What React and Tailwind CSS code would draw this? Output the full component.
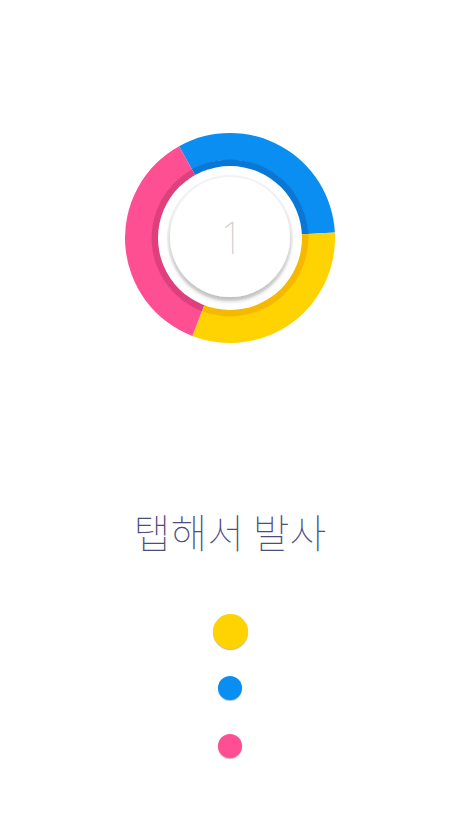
import React from 'react'

const C = 105

function pt(r, deg) {
  const a = (deg * Math.PI) / 180
  return [C + r * Math.sin(a), C - r * Math.cos(a)]
}

function sector(a1, a2, r1, r2) {
  const [x1, y1] = pt(r2, a1)
  const [x2, y2] = pt(r2, a2)
  const [x3, y3] = pt(r1, a2)
  const [x4, y4] = pt(r1, a1)
  const big = a2 - a1 > 180 ? 1 : 0
  return `M${x1} ${y1} A${r2} ${r2} 0 ${big} 1 ${x2} ${y2} L${x3} ${y3} A${r1} ${r1} 0 ${big} 0 ${x4} ${y4} Z`
}

const segments = [
  { from: -29, to: 87, color: '#0a8ef2', dark: '#0877d6' },
  { from: 87, to: 201, color: '#ffd302', dark: '#f7b900' },
  { from: 201, to: 331, color: '#ff4f93', dark: '#df3f7c' },
]

function Wheel() {
  return (
    <svg width="210" height="210" viewBox="0 0 210 210">
      <defs>
        <filter id="disk" x="-20%" y="-20%" width="140%" height="150%">
          <feDropShadow dx="0" dy="4" stdDeviation="2" floodColor="#000" floodOpacity="0.22" />
        </filter>
      </defs>
      {segments.map((s) => (
        <g key={s.from}>
          <path d={sector(s.from, s.to, 78, 105)} fill={s.color} />
          <path d={sector(s.from, s.to, 71, 78.5)} fill={s.dark} />
        </g>
      ))}
      <circle cx={C} cy={C} r="72" fill="#ffffff" />
      <circle cx={C} cy={C} r="63" fill="#f3f3f3" />
      <circle cx={C} cy={C - 1} r="60" fill="#ffffff" filter="url(#disk)" />
      <text
        x={C}
        y={C + 16}
        textAnchor="middle"
        fontSize="44"
        fontWeight="100"
        fill="#c8c8c8"
        style={{ fontFamily: 'Inter, "Noto Sans", sans-serif' }}
      >
        1
      </text>
    </svg>
  )
}

export default function App() {
  return (
    <div className="w-[460px] h-[818px] bg-white flex flex-col items-center pt-[133px]">
      <Wheel />
      <p
        className="mt-[166px] h-[44px] leading-[44px] text-[40px] font-thin text-[#4b4e7c]"
        style={{ fontFamily: '"Noto Sans CJK KR", "Noto Sans", sans-serif' }}
      >
        탭해서 발사
      </p>
      <div className="mt-[61px] w-[35px] h-[35px] rounded-full bg-[#ffd302] shadow-[0_1px_1px_rgba(120,90,0,0.45)]" />
      <div className="mt-[27px] w-[24px] h-[24px] rounded-full bg-[#0a8ef2] shadow-[0_1px_1px_rgba(0,60,120,0.35)]" />
      <div className="mt-[34px] w-[24px] h-[24px] rounded-full bg-[#ff4f93] shadow-[0_1px_1px_rgba(120,0,50,0.35)]" />
    </div>
  )
}
